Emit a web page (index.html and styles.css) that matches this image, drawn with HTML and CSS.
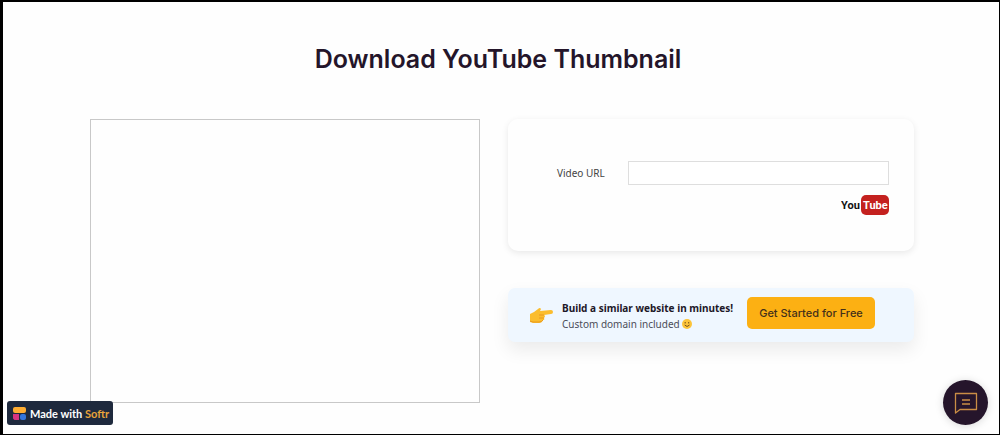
FILE: index.html
```
<!DOCTYPE html>
<html lang="en">
<head>
<meta charset="utf-8">
<title>Download YouTube Thumbnail</title>
<link rel="stylesheet" href="styles.css">
</head>
<body>
<main class="page">
  <h1 class="title">Download YouTube Thumbnail</h1>
  <div class="columns">
    <div class="preview"></div>
    <div class="side">
      <form class="card">
        <div class="field">
          <label class="label" for="url">Video URL</label>
          <input class="input" id="url" type="text">
        </div>
        <svg class="youtube" viewBox="0 0 48 22" role="img" aria-label="YouTube">
          <rect x="20" y="1" width="28" height="20" rx="5" fill="#c4211f"/>
          <text class="logo-text" x="0" y="15" fill="#111">You</text>
          <text class="logo-text" x="22" y="15" fill="#fff">Tube</text>
        </svg>
      </form>
      <section class="banner">
        <svg class="hand" viewBox="0 0 24 18" aria-hidden="true">
          <path d="M1 8 5 6 9 3Q11 1 12 3L11 5 22 4Q24 4 24 6T22 8L15 9Q17 10 15 12Q16 14 14 14Q13 17 10 17L4 17 1 16Z" fill="#fbbd2d"/>
          <path d="M1 15 4 16 10 16Q13 16 14 14M10 9H15M10 12H15" fill="none" stroke="#e99a20"/>
        </svg>
        <div class="copy">
          <strong class="lead">Build a similar website in minutes!</strong>
          <span class="note">Custom domain included
            <svg class="smile" viewBox="0 0 10 10" aria-hidden="true"><circle cx="5" cy="5" r="5" fill="#fcc43a"/><path d="M2.5 3.8h1.5M6.7 3v1.5M2.7 6Q5 9 7.5 6" fill="none" stroke="#76501c"/></svg>
          </span>
        </div>
        <button class="cta" type="button">Get Started for Free</button>
      </section>
    </div>
  </div>
</main>
<a class="made" href="#">
  <svg class="softr" viewBox="0 0 13 13" aria-hidden="true"><rect width="13" height="6" rx="2" fill="#ffad32"/><path d="M0 7H6V13H3Q0 13 0 10Z" fill="#d83480"/><circle cx="3" cy="10" r="3" fill="#d83480"/><rect x="7" y="7" width="6" height="6" rx="2" fill="#3475dc"/></svg>
  <span>Made with <span class="brand">Softr</span></span>
</a>
<button class="chat" type="button" aria-label="Open chat">
  <svg class="chat-icon" viewBox="0 0 24 22" aria-hidden="true"><path d="M1.500 1.500H22.500V17.500H6L1.500 21ZM8 8H16M8 12H16" fill="none" stroke="#c98d45" stroke-width="1.300" stroke-linejoin="round"/></svg>
</button>
</body>
</html>
```
FILE: styles.css
```
* { box-sizing: border-box; }
body {
  margin: 0;
  min-height: 100vh;
  border: solid #000;
  border-width: 2px 1px 1px 3px;
  background: #fefefe;
  font-family: "Noto Sans", "Open Sans", sans-serif;
  color: #24152a;
}
.page { padding: 39px 85px 31px 87px; }
.title {
  margin: 0 0 42px;
  padding-right: 8px;
  text-align: center;
  font: 600 25px/36px Inter, sans-serif;
}
.columns {
  display: grid;
  grid-template-columns: minmax(0, 390fr) minmax(0, 406fr);
  gap: 28px;
}
.preview { min-height: 284px; border: 1px solid #c8c8c8; }
.side { display: flex; flex-direction: column; gap: 37px; }
.card {
  display: flex;
  flex-direction: column;
  align-items: flex-end;
  gap: 9px;
  min-height: 132px;
  padding: 42px 25px 0 49px;
  border-radius: 10px;
  box-shadow: 0 2px 7px rgba(0, 0, 0, .09);
}
.field { display: flex; align-items: center; width: 100%; }
.label { flex: 0 0 71px; font-size: 10px; color: #444; }
.input {
  flex: 1;
  min-width: 0;
  height: 24px;
  padding: 0 8px;
  border: 1px solid #dedede;
  background: #fff;
}
.youtube { width: 48px; height: 22px; }
.logo-text { font: bold 11px Roboto, sans-serif; }
.banner {
  display: flex;
  align-items: center;
  min-height: 54px;
  padding: 0 39px 0 21px;
  border-radius: 7px;
  background: #eff7ff;
  box-shadow: 0 8px 18px rgba(0, 0, 0, .08);
}
.hand { flex: none; width: 24px; height: 18px; margin-right: 9px; }
.copy { display: flex; flex-direction: column; padding-top: 2px; font-size: 10px; line-height: 16px; white-space: nowrap; }
.lead { color: #1d1828; }
.note { color: #4b4d58; }
.smile { width: 10px; height: 10px; vertical-align: -1px; }
.cta {
  flex: none;
  width: 128px;
  height: 32px;
  margin: 0 0 4px auto;
  padding: 0;
  border: 0;
  border-radius: 5px;
  background: #fcb013;
  color: #44301a;
  font: 500 11px Inter, sans-serif;
}
.made {
  position: fixed;
  left: 7px;
  bottom: 10px;
  display: flex;
  align-items: center;
  gap: 4px;
  width: 106px;
  height: 24px;
  padding-left: 6px;
  border-radius: 3px;
  background: #1e293d;
  color: #fff;
  font: bold 11px Lato, sans-serif;
  text-decoration: none;
  white-space: nowrap;
}
.softr { width: 13px; height: 13px; }
.brand { color: #e9a33a; }
.chat {
  position: fixed;
  right: 12px;
  bottom: 10px;
  display: grid;
  place-items: center;
  width: 45px;
  height: 45px;
  padding: 0;
  border: 0;
  border-radius: 50%;
  background: #25152b;
  box-shadow: 0 1px 8px rgba(0, 0, 0, .15);
}
.chat-icon { width: 24px; height: 22px; }
```
